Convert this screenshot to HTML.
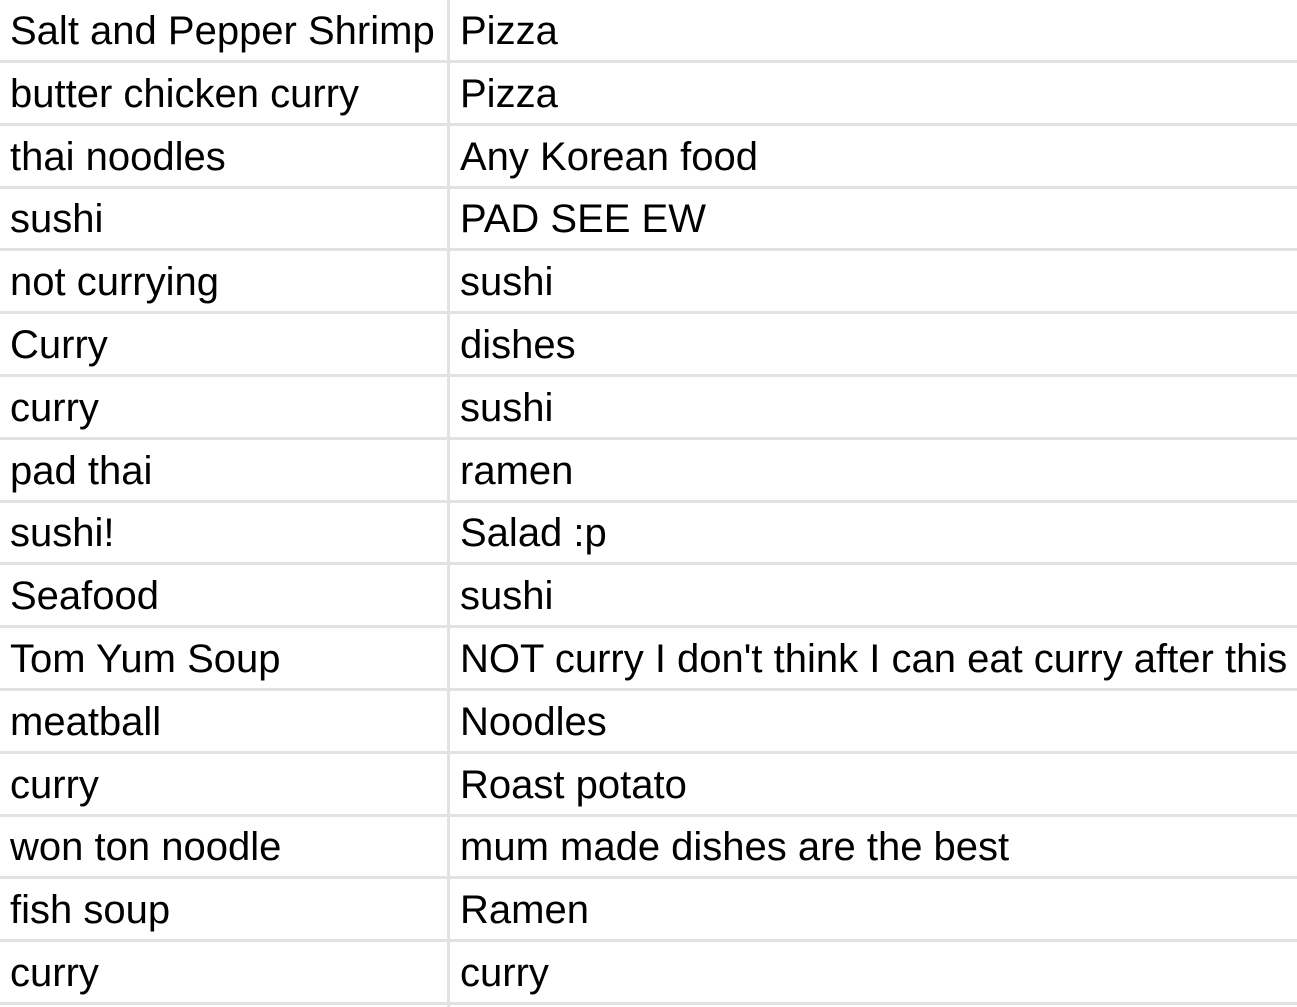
<!DOCTYPE html>
<html><head><meta charset="utf-8"><style>
html,body{margin:0;padding:0;background:#fff;width:1297px;height:1007px;overflow:hidden}
body{position:relative;font-family:"Liberation Sans",Arial,sans-serif;font-size:40px;color:#000}
.r{position:absolute;left:0;width:1297px;height:60px}
.l{position:absolute;left:0;width:1297px;height:3px;background:#e2e2e2}
.v{position:absolute;left:447px;top:0;width:3px;height:1007px;background:#e2e2e2}
.a,.b{position:absolute;top:0;line-height:60px;white-space:nowrap;padding-top:1px}
.a{left:10px}.b{left:460px}
</style></head><body>
<div class="v"></div>
<div class="r" style="top:0px"><span class="a">Salt and Pepper Shrimp</span><span class="b">Pizza</span></div><div class="l" style="top:60px"></div>
<div class="r" style="top:62.8px"><span class="a">butter chicken curry</span><span class="b">Pizza</span></div><div class="l" style="top:122.8px"></div>
<div class="r" style="top:125.6px"><span class="a">thai noodles</span><span class="b">Any Korean food</span></div><div class="l" style="top:185.6px"></div>
<div class="r" style="top:188.4px"><span class="a">sushi</span><span class="b">PAD SEE EW</span></div><div class="l" style="top:248.4px"></div>
<div class="r" style="top:251.2px"><span class="a">not currying</span><span class="b">sushi</span></div><div class="l" style="top:311.2px"></div>
<div class="r" style="top:314px"><span class="a">Curry</span><span class="b">dishes</span></div><div class="l" style="top:374px"></div>
<div class="r" style="top:376.8px"><span class="a">curry</span><span class="b">sushi</span></div><div class="l" style="top:436.8px"></div>
<div class="r" style="top:439.6px"><span class="a">pad thai</span><span class="b">ramen</span></div><div class="l" style="top:499.6px"></div>
<div class="r" style="top:502.4px"><span class="a">sushi!</span><span class="b">Salad :p</span></div><div class="l" style="top:562.4px"></div>
<div class="r" style="top:565.2px"><span class="a">Seafood</span><span class="b">sushi</span></div><div class="l" style="top:625.2px"></div>
<div class="r" style="top:628px"><span class="a">Tom Yum Soup</span><span class="b">NOT curry I don't think I can eat curry after this</span></div><div class="l" style="top:688px"></div>
<div class="r" style="top:690.8px"><span class="a">meatball</span><span class="b">Noodles</span></div><div class="l" style="top:750.8px"></div>
<div class="r" style="top:753.6px"><span class="a">curry</span><span class="b">Roast potato</span></div><div class="l" style="top:813.6px"></div>
<div class="r" style="top:816.4px"><span class="a">won ton noodle</span><span class="b">mum made dishes are the best</span></div><div class="l" style="top:876.4px"></div>
<div class="r" style="top:879.2px"><span class="a">fish soup</span><span class="b">Ramen</span></div><div class="l" style="top:939.2px"></div>
<div class="r" style="top:942px"><span class="a">curry</span><span class="b">curry</span></div><div class="l" style="top:1002px"></div>
</body></html>
